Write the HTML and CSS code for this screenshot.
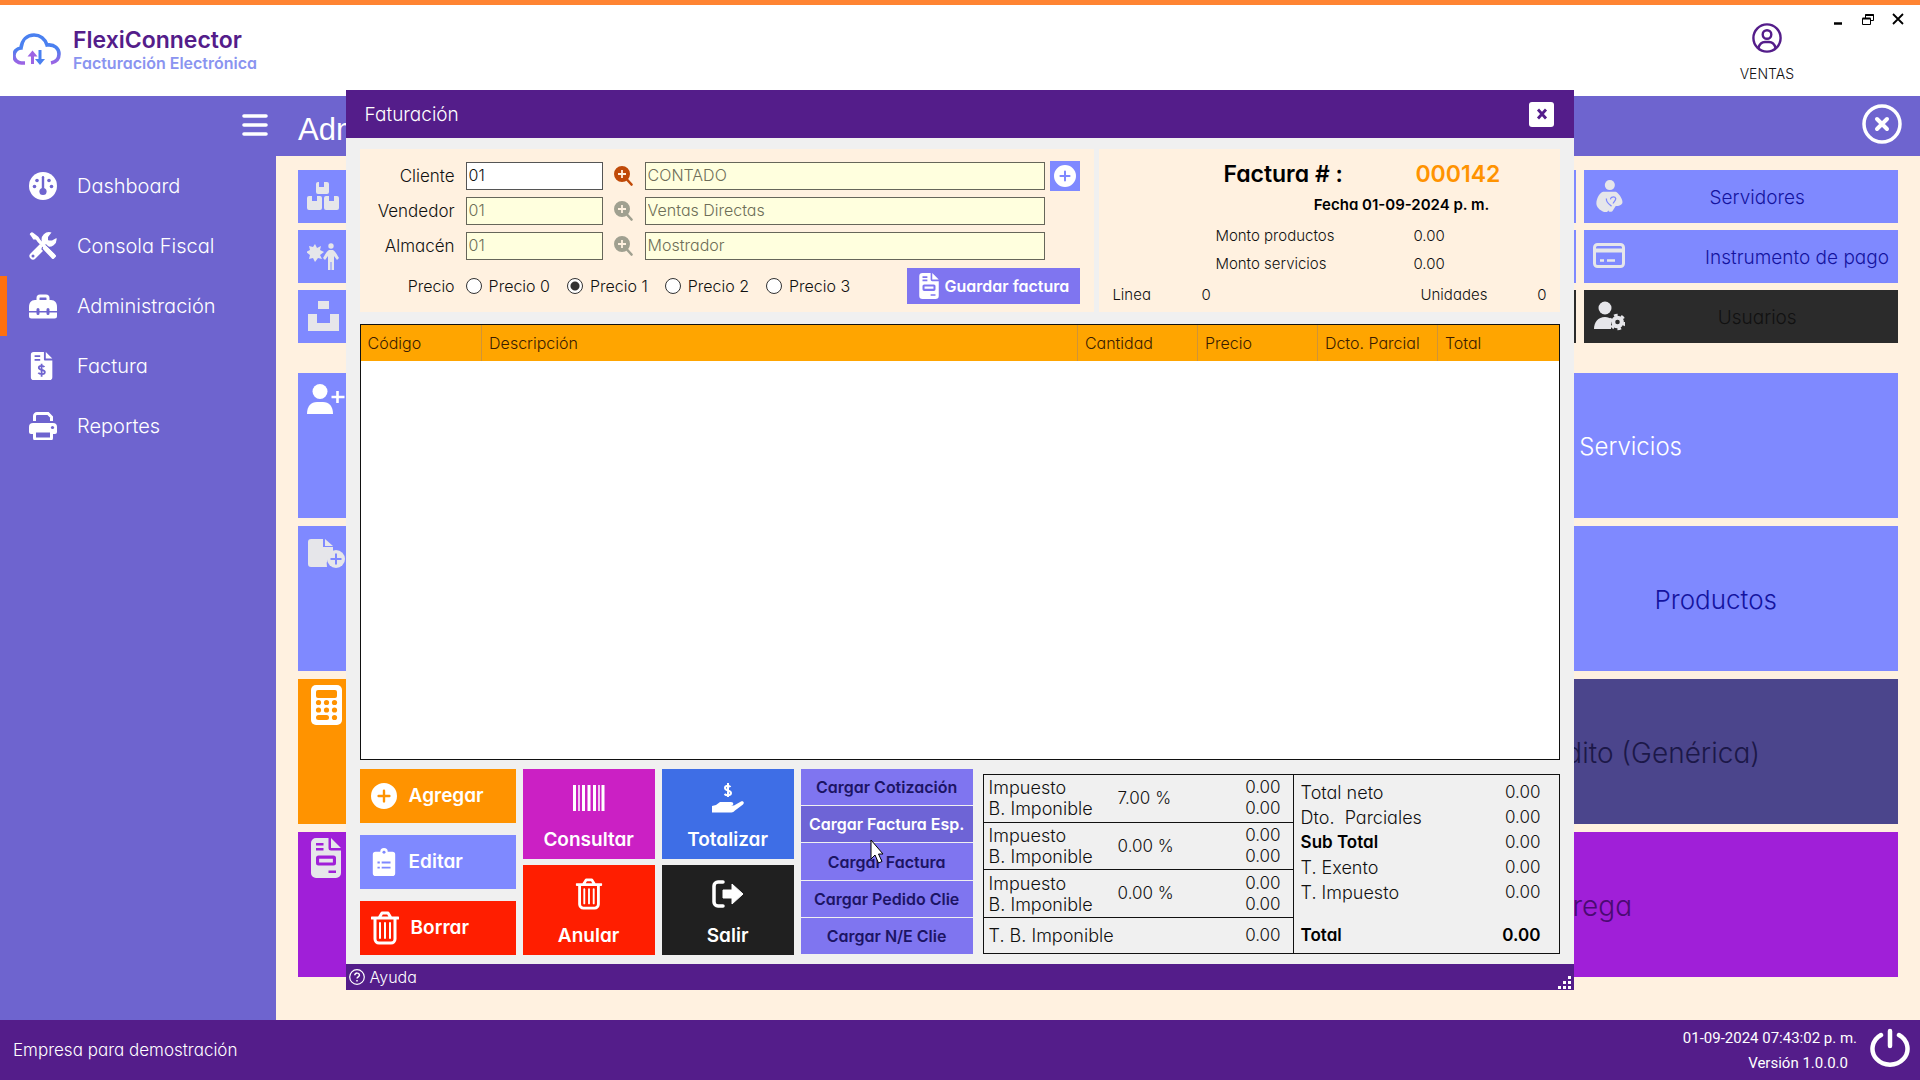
FILE: index.html
```html
<!DOCTYPE html>
<html lang="es">
<head>
<meta charset="utf-8">
<meta name="viewport" content="width=device-width, initial-scale=1">
<title>FlexiConnector</title>
<link rel="stylesheet" href="styles.css">
</head>
<body>
<svg class="sprite" aria-hidden="true">
  <symbol id="trash" viewBox="0 0 28 34"><path d="M1 7h26M8 7l3-5h6l3 5M4 7v21a4 4 0 0 0 4 4h12a4 4 0 0 0 4-4V7" fill="none" stroke="currentColor" stroke-width="3" stroke-linecap="round" stroke-linejoin="round"/><path d="M9 12v15M14 12v15M19 12v15" stroke="currentColor" stroke-width="2" stroke-linecap="round"/></symbol>
  <symbol id="plus-circle" viewBox="0 0 24 24"><path fill="currentColor" fill-rule="evenodd" d="M12 0a12 12 0 1 0 0 24 12 12 0 0 0 0-24zM10.900 7a1.100 1.100 0 0 1 2.200 0v3.900H17a1.100 1.100 0 0 1 0 2.200h-3.900V17a1.100 1.100 0 0 1-2.200 0v-3.900H7a1.100 1.100 0 0 1 0-2.200h3.900z"/></symbol>
  <symbol id="search-plus" viewBox="0 0 19 20"><path d="M12.500 13 17.500 18.500" stroke="currentColor" stroke-width="2.600" stroke-linecap="round"/><path fill="currentColor" fill-rule="evenodd" d="M8 0a8 8 0 1 0 0 16A8 8 0 0 0 8 0zM7.100 4h1.800v3.100H12v1.800H8.900V12H7.100V8.900H4V7.100h3.100z"/></symbol>
  <symbol id="invoice" viewBox="0 0 24 32"><path fill="currentColor" fill-rule="evenodd" d="M4 0h10v8a2 2 0 0 0 2 2h8v18a4 4 0 0 1-4 4H4a4 4 0 0 1-4-4V4a4 4 0 0 1 4-4zM16 0l8 8h-8zM4 4v2h6V4zM4 8v2h6V8zM6 14a2 2 0 0 0-2 2v4a2 2 0 0 0 2 2h12a2 2 0 0 0 2-2v-4a2 2 0 0 0-2-2zM6.500 16.500h11v3h-11zM14 26v2h6v-2z"/></symbol>
</svg>

<div class="app">
  <header class="topbar">
    <div class="brand">
      <svg class="brand-logo" viewBox="0 0 48 34" aria-hidden="true">
        <defs><linearGradient id="cloud" x1="0" y1="0" x2="0" y2="1"><stop offset=".5" stop-color="#4a80f0"/><stop offset="1" stop-color="#9c64e4"/></linearGradient></defs>
        <path d="M12 30H9a7.500 7.500 0 0 1-1-15C9 7 14 2 21 2c6 0 11 4 13 10 8-1 12 4 12 9s-3 8-8 9" fill="none" stroke="url(#cloud)" stroke-width="3.600"/>
        <path d="M19.500 31V21" stroke="#9c64e4" stroke-width="3"/><path d="M14.500 23.500l5-6 5 6z" fill="#9c64e4"/>
        <path d="M27 17v10" stroke="#4a80f0" stroke-width="3"/><path d="M22 26l5 6 5-6z" fill="#4a80f0"/>
      </svg>
      <div><h1 class="brand-name">FlexiConnector</h1><p class="brand-tag">Facturación Electrónica</p></div>
    </div>
    <div class="topbar-right">
      <div class="user">
        <svg viewBox="0 0 30 30" width="30" height="30" fill="none" stroke="#541d8a" stroke-width="2.400" aria-hidden="true"><circle cx="15" cy="15" r="13.600"/><circle cx="15" cy="11.500" r="4.300"/><path d="M6.500 25c1-4 3.500-6 6.500-6h4c3 0 5.500 2 6.500 6"/></svg>
        <span>VENTAS</span>
      </div>
      <div class="window-controls">
        <button aria-label="Minimizar"><svg viewBox="0 0 12 12"><path d="M2 10.500h8" stroke="#000" stroke-width="2.500"/></svg></button>
        <button aria-label="Restaurar"><svg viewBox="0 0 12 12" fill="#fff" stroke="#000"><path d="M3.500 1.500h8v6h-8z"/><path d="M3.500 2h8" stroke-width="2"/><path d="M.500 5.500h8v6h-8z"/><path d="M.500 5.500h8" stroke-width="2"/></svg></button>
        <button aria-label="Cerrar"><svg viewBox="0 0 12 12"><path d="M1 1l10 10M11 1L1 11" stroke="#000" stroke-width="1.800"/></svg></button>
      </div>
    </div>
  </header>

  <div class="main">
    <nav class="sidebar">
      <button class="menu-toggle" aria-label="Menú"><svg viewBox="0 0 26 24" width="26" height="24"><path d="M2 2h22M2 11h22M2 20h22" stroke="#fff" stroke-width="3.600" stroke-linecap="round"/></svg></button>
      <a class="nav-item" href="#"><svg viewBox="0 0 28 28" aria-hidden="true"><circle cx="14" cy="14" r="14" fill="#fff"/><g fill="#6e64cf"><rect x="12.800" y="4" width="2.400" height="15" rx="1.200"/><circle cx="14" cy="19.500" r="3.600"/><circle cx="8" cy="8.500" r="1.800"/><circle cx="20" cy="8.500" r="1.800"/><circle cx="5.500" cy="14.500" r="1.800"/><circle cx="22.500" cy="14.500" r="1.800"/></g></svg>Dashboard</a>
      <a class="nav-item" href="#"><svg viewBox="0 0 28 28" aria-hidden="true"><path d="M4 24 17 11" stroke="#fff" stroke-width="7" stroke-linecap="round"/><path d="M27.500 6a7.500 7.500 0 0 1-10.500 8l-4-4A7.500 7.500 0 0 1 22.500.500L19 5v3.500h4z" fill="#fff"/><path d="M2 0l6 4v4l6 6 3-1 10 9.500c1 1 1 2 0 3L25.500 27c-1 1-2 1-3 0L13 17l1-3-6-6H4L0 2z" fill="#fff" stroke="#6e64cf" stroke-width="1.200"/><path d="M3 2l5 4 2 3 6 6 8 8" stroke="#fff" stroke-width="3.500" fill="none" stroke-linecap="round"/><circle cx="4" cy="24" r="1.500" fill="#6e64cf"/></svg>Consola Fiscal</a>
      <a class="nav-item active" href="#"><svg viewBox="0 0 28 28" aria-hidden="true"><path d="M9 9V6a2 2 0 0 1 2-2h6a2 2 0 0 1 2 2v3" fill="none" stroke="#fff" stroke-width="3"/><path d="M0 19v-4c0-4 2-7 6-7h16c4 0 6 3 6 7v4zM0 20.500h28V24a2.500 2.500 0 0 1-2.500 2.500h-23A2.500 2.500 0 0 1 0 24z" fill="#fff"/><path d="M9 17.500v4M19 17.500v4" stroke="#6e64cf" stroke-width="3" stroke-linecap="round"/></svg>Administración</a>
      <a class="nav-item" href="#"><svg viewBox="0 0 28 30" aria-hidden="true"><path d="M4 0h11v8a1 1 0 0 0 1 1h8v18a3 3 0 0 1-3 3H4a3 3 0 0 1-3-3V3a3 3 0 0 1 3-3zM17 0l7 7h-7z" fill="#fff"/><path d="M5 4.500h6M5 8.500h6M15.500 16c-1-1.500-6-2-6 .8 0 3 6.500 1.500 6.500 4.700 0 3-5.500 2.800-7 .8M12.500 12.500v14" fill="none" stroke="#6e64cf" stroke-width="1.900"/></svg>Factura</a>
      <a class="nav-item" href="#"><svg viewBox="0 0 28 28" aria-hidden="true"><path d="M5.500 9V4a2.500 2.500 0 0 1 2.500-2.500h11L22.500 5v4" fill="none" stroke="#fff" stroke-width="3"/><path d="M4 11h20a4 4 0 0 1 4 4v5a2 2 0 0 1-2 2H2a2 2 0 0 1-2-2v-5a4 4 0 0 1 4-4z" fill="#fff"/><path d="M5.500 19h17v7a1 1 0 0 1-1 1h-15a1 1 0 0 1-1-1z" fill="#6e64cf" stroke="#fff" stroke-width="3"/><circle cx="23.500" cy="15.500" r="1.600" fill="#6e64cf"/></svg>Reportes</a>
    </nav>

    <main class="workspace">
      <div class="workspace-head">
        <h2>Administración</h2>
        <button class="close-page" aria-label="Cerrar página"><svg viewBox="0 0 40 40" width="40" height="40" fill="none" stroke="#fff"><circle cx="20" cy="20" r="18" stroke-width="3.500"/><path d="M15 15l10 10M25 15L15 25" stroke-width="4" stroke-linecap="round"/></svg></button>
      </div>
      <div class="small-tiles">
        <button class="tile" aria-label="Inventario"><svg viewBox="0 0 32 32" fill="#e6e6ea"><path d="M12 2v5h5V2h3a2 2 0 0 1 2 2v8a2 2 0 0 1-2 2H11a2 2 0 0 1-2-2V4a2 2 0 0 1 2-2zM5 16v5h5v-5h3a2 2 0 0 1 2 2v10a2 2 0 0 1-2 2H2a2 2 0 0 1-2-2V18a2 2 0 0 1 2-2zM22 16v5h5v-5h3a2 2 0 0 1 2 2v10a2 2 0 0 1-2 2H19a2 2 0 0 1-2-2V18a2 2 0 0 1 2-2z"/></svg></button>
        <button class="tile" aria-hidden="true" tabindex="-1"></button><button class="tile" aria-hidden="true" tabindex="-1"></button><button class="tile" aria-hidden="true" tabindex="-1"></button>
        <button class="tile"><svg viewBox="0 0 32 38" fill="#e6e6ea"><circle cx="17" cy="6" r="6"/><path d="M9 14h15c3 1 8 8 8 12s-5 5-8 5l-4 6c-3 2-6 0-4-3l3-5c-4-3-6-6-5-9 2-3 4 0 4 2 0-2 5-3 5 1 0 3-2 5-3 7l-7 9C6 37 1 33 1 28 1 22 5 15 9 14z"/><path d="M13 22c-1 4 3 7 6 9M18 23c-1-3 5-4 6-1 0 3-3 4-3 6" fill="none" stroke="#7f89ff" stroke-width="1.500"/></svg><span>Servidores</span></button>

        <button class="tile" aria-label="Vendedores"><svg viewBox="0 0 32 32" fill="#e6e6ea"><path d="M8 4l2 4 4-2-1 4 4 2-4 3 2 4-4-1-3 4-2-4-4 1 1-4-4-3 4-2-1-4 4 1z"/><circle cx="24" cy="6" r="2.700"/><path d="M22 10h4c3 2 4 5 6 8l-2 2-3-4v14h-2.500v-8h-1v8H21V16l-3 4-2-2c2-3 3-6 6-8z"/></svg></button>
        <button class="tile" aria-hidden="true" tabindex="-1"></button><button class="tile" aria-hidden="true" tabindex="-1"></button><button class="tile" aria-hidden="true" tabindex="-1"></button>
        <button class="tile"><svg viewBox="0 0 32 32"><rect x="1.500" y="4.500" width="29" height="22" rx="3" fill="none" stroke="#e6e6ea" stroke-width="3"/><path d="M2 10.500h28" stroke="#e6e6ea" stroke-width="4"/><path d="M7 20.500h4M14 20.500h8" stroke="#e6e6ea" stroke-width="2.500"/></svg><span class="label-end">Instrumento de pago</span></button>

        <button class="tile" aria-label="Almacenes"><svg viewBox="0 0 32 32" fill="#e6e6ea"><path d="M11 1h11v8H11zM1 14h9v9h13v-9h9v17H1z"/></svg></button>
        <button class="tile" aria-hidden="true" tabindex="-1"></button><button class="tile" aria-hidden="true" tabindex="-1"></button><button class="tile dark" aria-hidden="true" tabindex="-1"></button>
        <button class="tile dark"><svg viewBox="0 0 32 32"><circle cx="12" cy="8" r="6.500" fill="#e6e6ea"/><path d="M1 29c0-7 4-12 11-12 3 0 5 1 6 2v10z" fill="#e6e6ea"/><circle cx="24.500" cy="22" r="4.300" fill="none" stroke="#e6e6ea" stroke-width="4"/><circle cx="24.500" cy="22" r="7" fill="none" stroke="#e6e6ea" stroke-width="2.500" stroke-dasharray="3.700 3.600"/></svg><span>Usuarios</span></button>
      </div>
      <div class="big-tiles">
        <button class="tile big" aria-label="Clientes"><svg viewBox="0 0 38 32" fill="#fff"><circle cx="13" cy="8.500" r="7.500"/><path d="M0 31c0-8 4-12 10-12h6c6 0 10 4 10 12z"/><path d="M30.500 8v12M24.500 14h13" stroke="#fff" stroke-width="2.600"/></svg></button>
        <button class="tile big"><span class="big-label end-216 light">Servicios</span></button>
        <button class="tile big" aria-label="Nuevo documento"><svg viewBox="0 0 38 32"><path d="M4 3h12v8h10v7a11 11 0 0 0-6 13H4a3 3 0 0 1-3-3V6a3 3 0 0 1 3-3zM18 3l8 7h-8z" fill="#e6e6ea"/><circle cx="29" cy="23" r="9" fill="#e6e6ea"/><path d="M29 17.500v11M23.500 23h11" stroke="#7f89ff" stroke-width="2"/></svg></button>
        <button class="tile big"><span class="big-label end-121">Productos</span></button>
        <button class="tile big orange" aria-label="Calculadora"><svg viewBox="0 0 38 40"><rect x="4" y="0" width="31" height="40" rx="5" fill="#fff"/><g fill="#ff9300"><rect x="9" y="5" width="21" height="8" rx="2"/><rect x="9" y="30" width="13" height="5" rx="2.500"/><circle cx="11.500" cy="17.500" r="2.600"/><circle cx="19.500" cy="17.500" r="2.600"/><circle cx="27.500" cy="17.500" r="2.600"/><circle cx="11.500" cy="25" r="2.600"/><circle cx="19.500" cy="25" r="2.600"/><circle cx="27.500" cy="25" r="2.600"/><circle cx="27.500" cy="32.500" r="2.600"/></g></svg></button>
        <button class="tile big slate"><span class="big-label wide end-138 dim">Nota de Crédito (Genérica)</span></button>
        <button class="tile big violet" aria-label="Documento"><svg class="doc-icon"><use href="#invoice"/></svg></button>
        <button class="tile big violet"><span class="big-label wide end-266 plum">Nota de Entrega</span></button>
      </div>
    </main>
  </div>

  <footer class="footer">
    <span>Empresa para demostración</span>
    <div class="footer-right">
      <div class="footer-info"><span>01-09-2024 07:43:02 p. m.</span><span class="version">Versión 1.0.0.0</span></div>
      <button class="power" aria-label="Apagar"><svg viewBox="0 0 40 40" width="40" height="40" fill="none" stroke="#fff" stroke-width="4.500" stroke-linecap="round"><path d="M20 3v15M11 7a17.500 16 0 1 0 18 0"/></svg></button>
    </div>
  </footer>
</div>

<section class="modal" role="dialog" aria-labelledby="modal-title">
  <header class="modal-head"><h2 id="modal-title">Faturación</h2><button class="modal-close" aria-label="Cerrar ventana"><svg viewBox="0 0 12 12" width="12" height="12"><path d="M2 1.500l8 9M10 1.500l-8 9" stroke="#541d8a" stroke-width="2.800"/></svg></button></header>
  <div class="modal-body">
    <div class="modal-top">
      <form class="panel client-form">
        <label for="cliente">Cliente</label><input id="cliente" class="code" value="01"><button type="button" class="find active" aria-label="Buscar cliente"><svg><use href="#search-plus"/></svg></button><input class="off name" value="CONTADO" readonly aria-label="Nombre del cliente"><button type="button" class="add" aria-label="Nuevo cliente"><svg><use href="#plus-circle"/></svg></button>
        <label for="vendedor">Vendedor</label><input id="vendedor" class="off" value="01" readonly><button type="button" class="find" aria-label="Buscar vendedor"><svg><use href="#search-plus"/></svg></button><input class="off name" value="Ventas Directas" readonly aria-label="Nombre del vendedor"><span></span>
        <label for="almacen">Almacén</label><input id="almacen" class="off" value="01" readonly><button type="button" class="find" aria-label="Buscar almacén"><svg><use href="#search-plus"/></svg></button><input class="off name" value="Mostrador" readonly aria-label="Nombre del almacén"><span></span>
        <span class="row-label">Precio</span>
        <div class="price-row">
          <div class="radios">
            <label><input type="radio" name="precio">Precio 0</label><label><input type="radio" name="precio" checked>Precio 1</label><label><input type="radio" name="precio">Precio 2</label><label><input type="radio" name="precio">Precio 3</label>
          </div>
          <button type="button" class="save"><svg><use href="#invoice"/></svg>Guardar factura</button>
        </div>
      </form>
      <div class="panel invoice-info">
        <div class="inv-number"><span>Factura # :</span><strong>000142</strong></div>
        <div class="inv-date">Fecha 01-09-2024 p. m.</div>
        <div class="inv-amount"><span>Monto productos</span><span>0.00</span></div>
        <div class="inv-amount"><span>Monto servicios</span><span>0.00</span></div>
        <div class="inv-counts"><span>Linea</span><span>0</span><span class="units">Unidades</span><span class="units-value">0</span></div>
      </div>
    </div>

    <div class="items">
      <table>
        <colgroup><col class="c-code"><col><col class="c-num"><col class="c-num"><col class="c-num"><col class="c-total"></colgroup>
        <thead><tr><th>Código</th><th>Descripción</th><th>Cantidad</th><th>Precio</th><th>Dcto. Parcial</th><th>Total</th></tr></thead>
        <tbody></tbody>
      </table>
    </div>

    <div class="actions">
      <div class="col-edit">
        <button class="act orange"><svg class="i24"><use href="#plus-circle"/></svg>Agregar</button>
        <button class="act blue"><svg class="i24" viewBox="0 0 24 30"><path fill="#fff" d="M3 4h5a4 4 0 0 1 8 0h5a3 3 0 0 1 3 3v20a3 3 0 0 1-3 3H3a3 3 0 0 1-3-3V7a3 3 0 0 1 3-3z"/><path d="M9.500 15.500H19M9.500 21H19M5 15.500h2.500M5 21h2.500" stroke="#7f89ff" stroke-width="2"/><circle cx="12" cy="4.500" r="1.600" fill="#7f89ff"/></svg>Editar</button>
        <button class="act red"><svg class="i28"><use href="#trash"/></svg>Borrar</button>
      </div>
      <button class="act tall magenta"><svg viewBox="0 0 32 32"><path d="M1.500 3v26M10.500 3v26M16 3v26M21.500 3v26M30 3v26" stroke="#fff" stroke-width="3"/><path d="M6 3v26M26 3v26" stroke="#fff" stroke-width="1.500"/></svg>Consultar</button>
      <button class="act tall royal"><svg viewBox="0 0 32 32"><path d="M18.500 5c-1.500-2-5.500-1.500-5.500 1 0 3 6 2 6 5 0 2.500-4.500 3-6.500 1M16 1v14" fill="none" stroke="#fff" stroke-width="2"/><path d="M0 24l4-1 4-3h11c3 0 3 3.500 0 3.500h-4 7l7-4c2-1 4 1 2 3l-8 6c-2 2-3 2-5 2H0z" fill="#fff"/></svg>Totalizar</button>
      <button class="act tall red"><svg viewBox="0 0 28 34"><use href="#trash"/></svg>Anular</button>
      <button class="act tall black"><svg viewBox="0 0 32 32"><path d="M11 4H6a4 4 0 0 0-4 4v16a4 4 0 0 0 4 4h5" fill="none" stroke="#fff" stroke-width="3.500" stroke-linecap="round"/><path d="M11 12h9V6l11 10-11 10v-6h-9z" fill="#fff" stroke="#fff" stroke-linejoin="round"/></svg>Salir</button>
      <div class="col-load">
        <button>Cargar Cotización</button><button class="hover">Cargar Factura Esp.</button><button>Cargar Factura</button><button>Cargar Pedido Clie</button><button>Cargar N/E Clie</button>
        <svg class="pointer" viewBox="0 0 14 25" aria-hidden="true"><path d="M1 1v19l4-4 3.500 8 3.500-1.500L8.500 15H13z" fill="#fff" stroke="#000"/></svg>
      </div>
      <div class="totals">
        <div class="taxes">
          <div class="tax"><div>Impuesto<br>B. Imponible</div><span class="rate">7.00 %</span><div class="num">0.00<br>0.00</div></div>
          <div class="tax"><div>Impuesto<br>B. Imponible</div><span class="rate">0.00 %</span><div class="num">0.00<br>0.00</div></div>
          <div class="tax"><div>Impuesto<br>B. Imponible</div><span class="rate">0.00 %</span><div class="num">0.00<br>0.00</div></div>
          <div class="tax base"><div>T. B. Imponible</div><div class="num">0.00</div></div>
        </div>
        <div class="sums">
          <div><span>Total neto</span><span class="num">0.00</span></div>
          <div><span>Dto.&nbsp; Parciales</span><span class="num">0.00</span></div>
          <div><b>Sub Total</b><span class="num">0.00</span></div>
          <div><span>T. Exento</span><span class="num">0.00</span></div>
          <div><span>T. Impuesto</span><span class="num">0.00</span></div>
          <div class="grand"><b>Total</b><b class="num">0.00</b></div>
        </div>
      </div>
    </div>
  </div>
  <footer class="modal-foot">
    <a href="#"><svg viewBox="0 0 16 16" width="16" height="16" fill="none" stroke="#fff" aria-hidden="true"><circle cx="8" cy="8" r="7.300" stroke-width="1.200"/><path d="M5.800 6.300c0-3 4.600-2.800 4.600 0 0 1.500-2.300 1.600-2.300 3.200M8 11v1.500" stroke-width="1.500"/></svg>Ayuda</a>
    <svg viewBox="0 0 14 14" width="14" height="14" fill="#fff" aria-hidden="true"><path d="M10 0h3v3h-3zM10 5h3v3h-3zM10 10h3v3h-3zM5 5h3v3H5zM5 10h3v3H5zM0 10h3v3H0z"/></svg>
  </footer>
</section>
</body>
</html>
```
FILE: styles.css
```css
* { box-sizing: border-box; }
body {
  margin: 0;
  font-family: "Century Gothic", Inter, "Open Sans", sans-serif;
  font-feature-settings: "cv11";
  font-weight: 300;
  font-size: 16px;
  line-height: 20px;
  color: #111;
}
h1, h2, p { margin: 0; font-weight: 300; }
button { border: 0; padding: 0; margin: 0; background: none; font: inherit; font-feature-settings: inherit; color: inherit; }
input { font: inherit; font-feature-settings: inherit; }
a { color: inherit; text-decoration: none; }
svg { flex: none; display: block; }
.sprite { position: absolute; width: 0; height: 0; }

.app { min-height: 100vh; display: flex; flex-direction: column; }

/* Top bar */
.topbar { height: 96px; border-top: 5px solid #ff8432; background: #fff; display: flex; justify-content: space-between; }
.brand { display: flex; align-items: center; gap: 12px; padding: 0 0 2px 13px; }
.brand-logo { width: 48px; height: 34px; }
.brand-name { font-size: 23px; line-height: 26px; font-weight: 600; color: #541d8a; }
.brand-tag { font-size: 16px; line-height: 20px; font-weight: 600; color: #8a94f0; }
.topbar-right { display: flex; gap: 38px; padding-right: 16px; }
.user { display: flex; flex-direction: column; align-items: center; gap: 11px; padding-top: 18px; font-size: 14px; }
.window-controls { display: flex; gap: 18px; padding-top: 8px; height: 20px; }
.window-controls svg { width: 12px; height: 12px; }

/* Main area */
.main { flex: 1; display: flex; background: #fff1e0; }
.sidebar { width: 276px; background: #6e64cf; color: #fff; }
.menu-toggle { display: flex; margin-left: auto; height: 60px; padding: 18px 8px 0 0; }
.nav-item { display: flex; align-items: center; gap: 20px; height: 60px; padding-left: 29px; font-size: 20px; }
.nav-item svg { width: 28px; height: 28px; }
.nav-item.active { border-left: 7px solid #ff7010; padding-left: 22px; }

.workspace { flex: 1; min-width: 0; }
.workspace-head { height: 60px; display: flex; align-items: center; justify-content: space-between; padding: 0 18px 0 22px; background: #6e64cf; color: #fff; }
.workspace-head h2 { font: 400 31px/40px "Liberation Sans", Arial, sans-serif; padding-top: 8px; }
.close-page { padding-bottom: 4px; }
.small-tiles { display: grid; grid-template-columns: repeat(5, 1fr); gap: 7px 8px; padding: 14px 22px 30px; }
.big-tiles { display: grid; grid-template-columns: 1fr 1fr; gap: 8px; padding: 0 22px 43px; }
.tile { display: flex; align-items: center; height: 53px; padding: 2px 9px 0; background: #7f89ff; color: #1414a0; font-size: 19px; text-align: center; }
.tile svg { width: 32px; height: 36px; padding-bottom: 4px; }
.tile span { flex: 1; }
.tile .label-end { text-align: right; }
.tile.dark { background: #2b2b2b; color: #111; }
.tile.big { height: 145px; align-items: flex-start; }
.tile.big svg { width: 38px; height: 40px; padding: 0; margin-top: 4px; }
.tile.big .doc-icon { color: #e6e6ea; }
.big-label { align-self: center; text-align: right; font-size: 26px; line-height: 32px; }
.big-label.wide { font-size: 28px; }
.big-label.light { font-size: 24px; color: #fff; }
.end-216 { padding-right: 207px; }
.end-121 { padding-right: 112px; }
.end-138 { padding-right: 129px; }
.end-266 { padding-right: 257px; }
.dim { color: #1c1848; }
.plum { color: #4a0a72; }
.orange, .tile.orange { background: #ff9300; }
.tile.slate { background: #4b458c; }
.tile.violet { background: #a01fd8; }

/* Footer */
.footer { height: 60px; display: flex; align-items: center; justify-content: space-between; padding: 0 10px 0 13px; background: #541d8a; color: #fff; font-size: 17px; }
.footer-right { display: flex; align-items: center; gap: 13px; }
.footer-info { display: flex; flex-direction: column; align-items: flex-end; padding-top: 2px; font: 400 15px/25px Roboto, "Liberation Sans", sans-serif; }
.version { padding-right: 9px; }
.power { padding-bottom: 4px; }

/* Billing window */
.modal { position: absolute; top: 90px; left: 18%; width: 64%; background: #f0f0f0; }
.modal-head { height: 48px; display: flex; align-items: center; justify-content: space-between; padding: 0 20px 0 19px; background: #541d8a; color: #fff; }
.modal-head h2 { font-size: 19px; line-height: 24px; padding-top: 2px; }
.modal-close { width: 25px; height: 25px; display: flex; align-items: center; justify-content: center; background: #fff; border-radius: 3px; }
.modal-body { padding: 11px 14px 9px; }
.modal-top { display: flex; gap: 5px; }
.panel { background: #fff1e0; height: 163px; }
.client-form { flex: 1; display: grid; grid-template-columns: 95px 137px 20px 1fr 30px; column-gap: 11px; row-gap: 7px; align-content: start; align-items: center; padding: 13px 14px 0 0; font-size: 17px; }
.client-form > label, .row-label { text-align: right; }
.client-form > input { width: 100%; height: 28px; padding: 0 2px 2px; border: 1px solid #555; background: #fff; font-size: 16px; font-weight: 300; color: #111; }
.client-form > .off { background: #ffffde; border-color: #66665a; color: #6e6e58; }
.client-form > .name { width: calc(100% + 6px); }
.find svg { width: 19px; height: 20px; color: #a0a090; }
.find.active svg { color: #c04a08; }
.add { height: 30px; width: 30px; display: grid; place-items: center; margin: -1px 0; background: #7f89ff; color: #fff; }
.add svg { width: 22px; height: 22px; }
.row-label { font-size: 16px; }
.price-row { grid-column: 2 / -1; display: flex; align-items: center; justify-content: space-between; height: 37px; font-size: 16px; }
.radios { display: flex; gap: 17px; }
.radios label { display: flex; align-items: center; gap: 7px; }
.radios input { appearance: none; width: 16px; height: 16px; margin: 0; border: 1px solid #333; border-radius: 50%; background: #fff; }
.radios input:checked { background: radial-gradient(circle, #333 0 4px, #fff 5px); }
.save { display: flex; align-items: center; justify-content: center; gap: 6px; width: 173px; height: 36px; background: #7f75f0; color: #fff; font-weight: 600; font-size: 16px; }
.save svg { width: 20px; height: 26px; }

.invoice-info { width: 461px; padding: 11px 14px 0 13px; font-size: 15px; }
.inv-number { display: grid; grid-template-columns: 192px 1fr; padding-left: 111px; font-size: 23px; line-height: 28px; font-weight: 600; color: #000; }
.inv-number strong { font-weight: 600; color: #ff9300; }
.inv-date { padding: 7px 57px 7px 0; text-align: right; font-size: 15px; line-height: 20px; font-weight: 600; color: #000; }
.inv-amount { display: grid; grid-template-columns: 198px 1fr; padding-left: 103px; line-height: 28px; }
.inv-counts { display: flex; line-height: 34px; }
.inv-counts > :first-child { width: 89px; }
.units { margin-left: auto; }
.units-value { width: 59px; text-align: right; }

.items { height: 436px; margin-top: 12px; border: 1px solid #111; background: #fff; }
.items table { width: 100%; table-layout: fixed; border-collapse: collapse; }
.c-code { width: 121px; }
.c-num { width: 120px; }
.c-total { width: 122px; }
.items th { height: 36px; padding: 0 0 0 7px; background: #ffa500; border-right: 1px solid #d09438; font-weight: 300; font-size: 16px; text-align: left; white-space: nowrap; color: #3a1c00; }
.items th:last-child { border-right: 0; }

.actions { display: grid; grid-template-columns: 156px 132px 132px 172px 1fr; grid-template-rows: 90px 90px; gap: 6px 7px; margin-top: 9px; }
.col-edit, .col-load, .totals { grid-row: 1 / 3; }
.col-edit { grid-column: 1; display: flex; flex-direction: column; justify-content: space-between; }
.act { display: flex; align-items: center; gap: 12px; height: 54px; padding-left: 11px; color: #fff; font-weight: 600; font-size: 19px; }
.i24 { width: 26px; height: 28px; }
.i28 { width: 28px; height: 34px; }
.act.blue { background: #7f89ff; }
.act.red { background: #ff1e00; }
.act.tall { height: 90px; flex-direction: column; justify-content: flex-end; gap: 16px; padding: 0 0 9px; }
.act.tall svg { width: 32px; height: 32px; }
.magenta { background: #cb20c4; grid-column: 2; grid-row: 1; }
.royal { background: #3e6ee6; grid-column: 3; grid-row: 1; }
.tall.red { grid-column: 2; grid-row: 2; }
.black { background: #202020; grid-column: 3; grid-row: 2; }
.col-load { grid-column: 4; position: relative; display: flex; flex-direction: column; gap: 1px; padding-bottom: 1px; }
.col-load button { flex: 1; background: #7f75f0; color: #1c1464; font-weight: 600; font-size: 16px; }
.col-load .hover { background: #6e64d6; color: #fff; }
.pointer { position: absolute; left: 69px; top: 70px; width: 14px; height: 25px; }

.totals { grid-column: 5; display: flex; margin: 5px 0 1px 3px; border: 1px solid #111; font-size: 18px; }
.taxes { width: 310px; border-right: 1px solid #111; display: flex; flex-direction: column; }
.tax { flex: 1 0 0; display: grid; grid-template-columns: 129px 1fr 54px; align-items: center; padding: 0 12px 0 5px; line-height: 21px; border-bottom: 1px solid #111; }
.tax.base { flex: 0 0 35px; border: 0; grid-template-columns: 1fr 54px; }
.num { text-align: right; }
.num, .rate, .sums b { font-size: 17px; }
.sums { flex: 1; display: flex; flex-direction: column; padding: 5px 19px 0 7px; }
.sums div { display: flex; justify-content: space-between; line-height: 25px; }
.sums b { font-weight: 600; color: #000; }
.sums .grand { margin-top: auto; padding-bottom: 5px; }

.modal-foot { height: 26px; display: flex; align-items: center; justify-content: space-between; padding: 0 2px 0 3px; background: #541d8a; color: #fff; }
.modal-foot a { display: flex; align-items: center; gap: 5px; }
.modal-foot > svg { align-self: flex-end; }
```
